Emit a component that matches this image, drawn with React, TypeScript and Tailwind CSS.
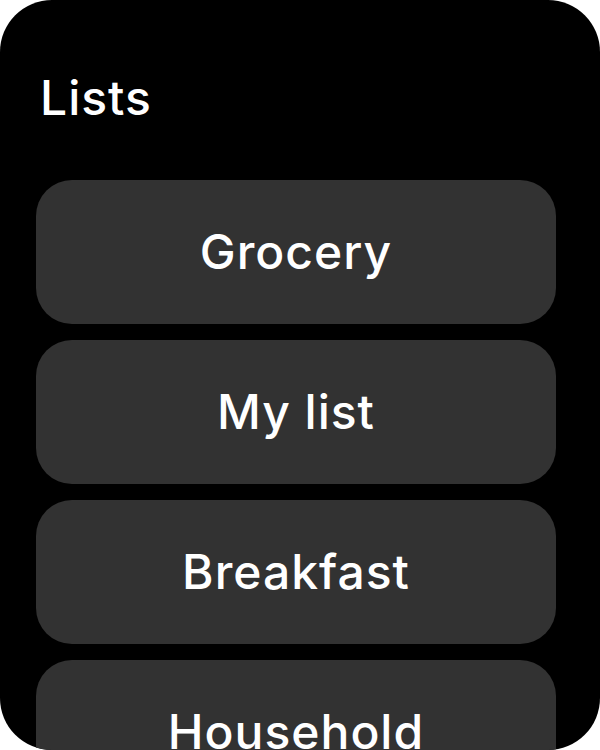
import React from 'react';

const lists: string[] = ['Grocery', 'My list', 'Breakfast', 'Household'];

const App: React.FC = () => {
  return (
    <div className="w-[600px] h-[750px] bg-white" style={{ fontFamily: 'Inter, "Noto Sans", sans-serif' }}>
      <div className="w-full h-full rounded-[52px] bg-black overflow-hidden">
        {/* Header */}
        <h1 className="pl-10 pt-[70px] h-[180px] text-[48px] leading-[56px] tracking-[1px] font-medium text-white">
          Lists
        </h1>

        {/* List cards */}
        <div className="flex flex-col gap-4 pl-9 pr-11">
          {lists.map((name) => (
            <div
              key={name}
              className="h-[144px] shrink-0 rounded-[36px] bg-[#323232] flex items-center justify-center"
            >
              <span className="text-[48px] leading-[56px] tracking-[1px] font-medium text-white">{name}</span>
            </div>
          ))}
        </div>
      </div>
    </div>
  );
};

export default App;
